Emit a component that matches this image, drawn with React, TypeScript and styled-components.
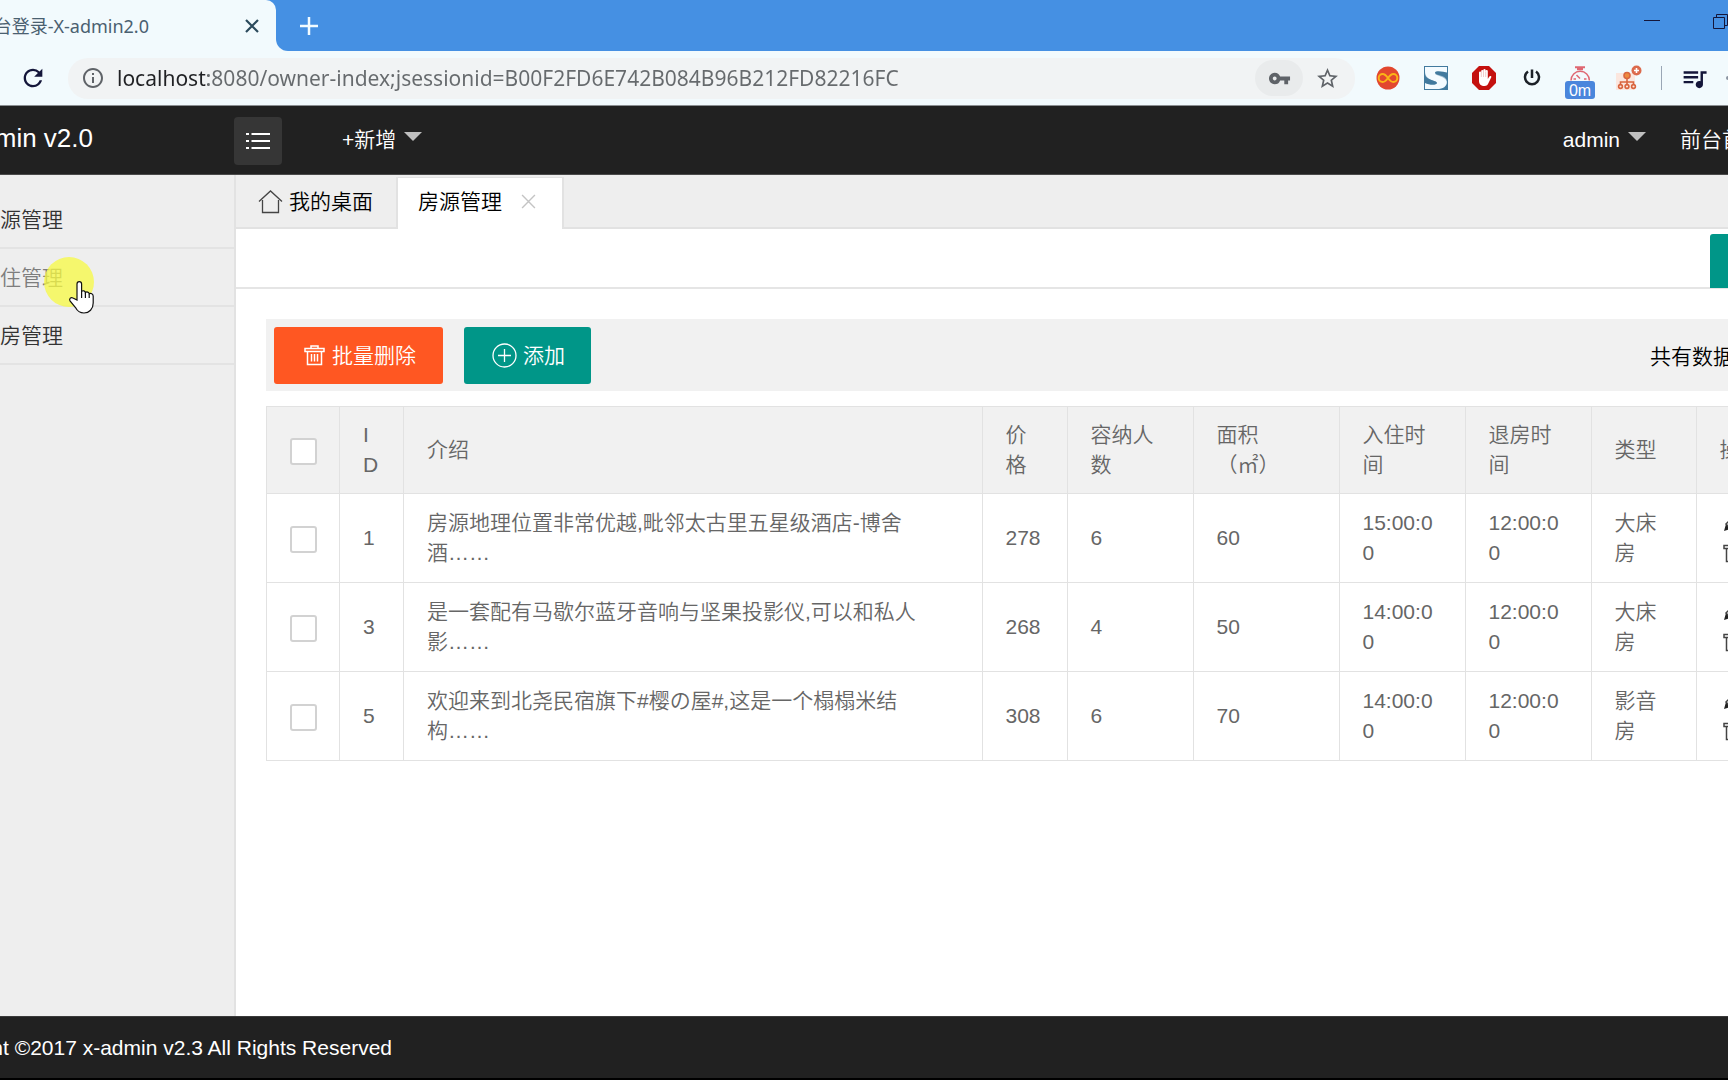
import React from "react";
import styled, { createGlobalStyle } from "styled-components";
import {
  MdInfoOutline,
  MdQueueMusic,
  MdRefresh,
  MdStarBorder,
  MdVpnKey,
} from "react-icons/md";

const GlobalStyle = createGlobalStyle`
  * { box-sizing: border-box; }
  body {
    margin: 0;
    overflow: hidden;
    font-family: "Liberation Sans", "Noto Sans CJK SC", sans-serif;
    font-size: 21px;
    font-weight: 350;
    line-height: 30px;
    text-spacing-trim: space-all;
    color: #000;
    background: #fff;
  }
  button, input { font: inherit; margin: 0; }
  button { border: 0; padding: 0; background: none; cursor: pointer; }
  svg { display: block; flex: none; }
`;

const Page = styled.div`
  display: flex;
  flex-direction: column;
  height: 100vh;
  overflow: hidden;
`;

/* Browser window */

const TabStrip = styled.div`
  display: flex;
  height: 51px;
  flex: none;
  background: #4590e3;
`;

const BrowserTab = styled.div`
  display: flex;
  align-items: center;
  justify-content: space-between;
  width: 276px;
  flex: none;
  padding-right: 17px;
  border-top-right-radius: 10px;
  background: #f2fafd;
`;

const BrowserTabTitle = styled.div`
  display: flex;
  justify-content: flex-end;
  width: 149px;
  overflow: hidden;
  white-space: nowrap;
  font-family: "Noto Sans", "Noto Sans CJK SC", sans-serif;
  font-size: 18px;
  font-weight: 400;
  color: #4a6070;
`;

const TabCorner = styled.div`
  display: flex;
  flex: 1;
  min-width: 0;
  background: linear-gradient(#4590e3 50%, #f2fafd 50%);
`;

const WindowBar = styled.div`
  display: flex;
  align-items: center;
  justify-content: space-between;
  flex: 1;
  padding-left: 24px;
  overflow: hidden;
  border-bottom-left-radius: 12px;
  background: #4590e3;
`;

const WindowButtons = styled.div`
  display: flex;
  align-items: center;
  gap: 52px;
  align-self: flex-start;
  padding-top: 12px;
`;

const BrowserBar = styled.div`
  display: flex;
  align-items: center;
  height: 55px;
  flex: none;
  padding: 0 0 0 19px;
  border-bottom: 1px solid #8b8f92;
  background: #f2fafd;
  color: #14163a;
`;

const AddressBar = styled.form`
  display: flex;
  align-items: center;
  flex: 1;
  min-width: 0;
  height: 41px;
  margin-left: 21px;
  padding: 0 15px 0 13px;
  border-radius: 20px;
  background: #f1f3f4;
  color: #5f6368;
`;

const AddressInput = styled.input`
  flex: 1;
  min-width: 0;
  margin-left: 12px;
  padding: 0;
  border: 0;
  outline: 0;
  font-family: "Noto Sans", sans-serif;
  font-size: 21px;
  font-weight: 400;
  color: #666a6d;
  background: linear-gradient(90deg, #202124 91px, #666a6d 91px);
  background-clip: text;
  -webkit-background-clip: text;
  -webkit-text-fill-color: transparent;
`;

const KeyButton = styled.button`
  display: grid;
  place-items: center;
  width: 48px;
  height: 36px;
  margin-right: 12px;
  border-radius: 18px;
  background: #e9ebec;
  color: #5f6368;
`;

const PlainButton = styled.button`
  display: grid;
  place-items: center;
  color: inherit;
`;

const Extensions = styled.div`
  display: flex;
  align-items: center;
  gap: 24px;
  flex: none;
  padding-left: 21px;
`;

const TimerExtension = styled.button`
  position: relative;
  display: grid;
  place-items: center;
`;

const TimerBadge = styled.span`
  position: absolute;
  top: 15px;
  left: -3px;
  width: 30px;
  height: 18px;
  border-radius: 3px;
  font-size: 16px;
  line-height: 19px;
  text-align: center;
  color: #fff;
  background: #4a86dc;
`;

const BarEnd = styled.div`
  display: flex;
  align-items: center;
  justify-content: space-between;
  flex: none;
  width: 67px;
  height: 24px;
  margin-left: 19px;
  border-left: 1px solid #9aa6b5;
  padding-left: 18px;
`;

/* Admin header */

const Header = styled.header`
  display: flex;
  align-items: center;
  height: 69px;
  flex: none;
  overflow: hidden;
  border-bottom: 1px solid #4a4a4a;
  background: #212121;
  color: #fff;
`;

const Logo = styled.a`
  display: flex;
  justify-content: flex-end;
  width: 93px;
  padding-bottom: 4px;
  overflow: hidden;
  white-space: nowrap;
  font-size: 26px;
  color: #fff;
  text-decoration: none;
`;

const MenuToggle = styled.button`
  display: grid;
  place-items: center;
  width: 48px;
  height: 48px;
  margin: 2px 0 0 141px;
  border-radius: 4px;
  background: #363636;
`;

const NavMenu = styled.button`
  display: flex;
  align-items: center;
  gap: 8px;
  color: #fff;
  white-space: nowrap;
`;

const AddMenu = styled(NavMenu)`
  margin-left: 60px;
`;

const Caret = styled.span`
  border: 9px solid transparent;
  border-top-color: #bfbfbf;
  border-bottom: 0;
  margin-bottom: 8px;
`;

const UserNav = styled.nav`
  display: flex;
  align-items: center;
  gap: 34px;
  margin-left: auto;
`;

const FrontLink = styled.a`
  width: 48px;
  overflow: hidden;
  white-space: nowrap;
  color: #fff;
  text-decoration: none;
`;

/* Body */

const Body = styled.div`
  display: flex;
  flex: 1;
  min-height: 0;
`;

const Sidebar = styled.nav`
  width: 236px;
  flex: none;
  padding-top: 16px;
  border-right: 2px solid #e2e2e2;
  background: #eeeeee;
`;

const SideItem = styled.div`
  position: relative;
`;

const SideLink = styled.a<{ $hover?: boolean }>`
  display: block;
  padding: 14px 0 12px;
  border-bottom: 2px solid #e3e3e3;
  color: ${(p) => (p.$hover ? "#7d7d7d" : "#333")};
  text-decoration: none;
`;

const PointerSpot = styled.div`
  position: absolute;
  left: 44px;
  top: 8px;
  width: 50px;
  height: 50px;
  border-radius: 50%;
  background: rgba(247, 249, 66, 0.75);
  pointer-events: none;
`;

const HandPointer = styled.svg`
  position: absolute;
  left: 24px;
  top: 23px;
`;

const Main = styled.main`
  display: flex;
  flex-direction: column;
  flex: 1;
  min-width: 0;
`;

const PageTabs = styled.div`
  display: flex;
  align-items: flex-end;
  height: 54px;
  background: linear-gradient(#eeeeee 52px, #e2e2e2 52px);
`;

const PageTab = styled.button<{ $active?: boolean }>`
  display: flex;
  align-items: center;
  gap: ${(p) => (p.$active ? "19px" : "6px")};
  height: 52px;
  padding: ${(p) => (p.$active ? "0 26px 4px 20px" : "0 23px 3px 22px")};
  border: solid #e2e2e2;
  border-width: ${(p) => (p.$active ? "1px 2px 0 2px" : "0")};
  background: ${(p) => (p.$active ? "#fff" : "none")};
  color: #000;
`;

const Crumbs = styled.div`
  display: flex;
  justify-content: flex-end;
  align-items: flex-end;
  height: 60px;
  border-bottom: 2px solid #e5e5e5;
`;

const RefreshButton = styled.button`
  width: 18px;
  height: 54px;
  margin-bottom: -1px;
  border-radius: 3px 0 0 0;
  background: #009688;
`;

const Content = styled.section`
  padding: 30px 0 0 30px;
`;

const ActionBar = styled.div`
  display: flex;
  align-items: center;
  gap: 21px;
  height: 72px;
  padding-left: 8px;
  background: #f1f1f1;
`;

const ActionButton = styled.button<{ $danger?: boolean }>`
  display: flex;
  align-items: center;
  gap: ${(p) => (p.$danger ? "7px" : "6px")};
  height: 57px;
  padding: ${(p) => (p.$danger ? "0 27px 0 30px" : "0 26px 0 28px")};
  border-radius: 3px;
  color: #fff;
  background: ${(p) => (p.$danger ? "#ff5722" : "#009688")};
`;

const ActionLabel = styled.span`
  padding-top: 2px;
`;

const Total = styled.span`
  width: 78px;
  margin-left: auto;
  padding-top: 3px;
  overflow: hidden;
  white-space: nowrap;
`;

const Table = styled.table`
  width: 100%;
  margin-top: 15px;
  table-layout: fixed;
  border-collapse: collapse;
  color: #666;
`;

const Col = styled.col<{ $width?: number }>`
  width: ${(p) => (p.$width ? `${p.$width}px` : "auto")};
`;

const HeadCell = styled.th`
  height: 87px;
  padding: 0 23px;
  border: 1px solid #e2e2e2;
  background: #f1f1f1;
  font-weight: inherit;
  text-align: left;
  word-break: break-all;
`;

const Cell = styled.td<{ $prose?: boolean }>`
  height: 89px;
  padding: 0 23px;
  border: 1px solid #e2e2e2;
  word-break: ${(p) => (p.$prose ? "normal" : "break-all")};
`;

const EdgeCell = styled(Cell)`
  padding-right: 0;
  border-right: 0;
  overflow: hidden;
`;

const EdgeHeadCell = styled(HeadCell)`
  padding-right: 0;
  border-right: 0;
  overflow: hidden;
  white-space: nowrap;
`;

const RowActions = styled.div`
  display: flex;
  flex-direction: column;
  gap: 8px;
  padding-left: 3px;
`;

const Tick = styled.input`
  display: block;
  width: 27px;
  height: 27px;
  appearance: none;
  border: 2px solid #d2d2d2;
  border-radius: 3px;
  background: #fff;
`;

const TickBox = styled.div`
  padding-top: 2px;
`;

const Footer = styled.footer`
  height: 64px;
  flex: none;
  padding-top: 16px;
  border-top: 1px solid #3a3a3a;
  border-bottom: 2px solid #000;
  background: #212121;
  color: #fff;
`;

const FooterText = styled.div`
  display: flex;
  justify-content: flex-end;
  width: 392px;
  overflow: hidden;
  white-space: nowrap;
`;

const Cross = ({ size, color, width }: { size: number; color: string; width: number }) => (
  <svg width={size} height={size} viewBox="0 0 14 14" fill="none" stroke={color} strokeWidth={width}>
    <path d="M1 1l12 12M13 1L1 13" />
  </svg>
);

const Trash = ({ color = "currentColor" }: { color?: string }) => (
  <svg width="21" height="21" viewBox="0 0 21 21" fill="none" stroke={color} strokeWidth="1.5">
    <path d="M7 3V1h7v2M1 3.5h19v3H1zM3.500 6.500V19.500h14V6.500M7.500 9v7.500M10.500 9v7.500M13.500 9v7.500" />
  </svg>
);

const Pencil = () => (
  <svg width="21" height="21" viewBox="0 0 21 21">
    <path d="M1 18l2-7 5 5z" fill="#222" />
    <path d="M3 11L12 2l5 5L8 16z" fill="none" stroke="#444" strokeWidth="1.500" />
  </svg>
);

const Infinity = () => (
  <svg width="24" height="24" viewBox="0 0 24 24">
    <circle cx="12" cy="12" r="11.500" fill="#e2472f" />
    <path
      d="M12 12c-2-2.800-3.500-4-5.300-4a4 4 0 000 8c1.800 0 3.300-1.200 5.300-4s3.500-4 5.300-4a4 4 0 010 8c-1.800 0-3.300-1.200-5.300-4z"
      fill="none"
      stroke="#fbb416"
      strokeWidth="1.900"
    />
  </svg>
);

const SLogo = () => (
  <svg width="24" height="24" viewBox="0 0 24 24">
    <path d="M0 0h24v24H0z" fill="#427a9e" />
    <path d="M1 1h22v6c-3-1.800-12-2.800-12-.3 0 3 12 1.800 12 8.800 0 5-4 7.500-10 7.500H1v-6c4 2.200 12 2.500 12 0C13 14 1 14.500 1 7.500z" fill="#f4fbff" />
    <path d="M1 5v10c3 1.500 9 2 12 2-1-3-12-2-12-12zM23 6v11c0-6-9-7-12-9 3-1.500 8-1 12-2z" fill="#427a9e" opacity="0.500" />
  </svg>
);

const BlockHand = () => (
  <svg width="24" height="24" viewBox="0 0 24 24">
    <path d="M7 0h10l7 7v10l-7 7H7l-7-7V7z" fill="#c4110f" />
    <path
      d="M7 12V6.500a1.100 1.100 0 012.200 0V5a1.100 1.100 0 012.200 0V4a1.100 1.100 0 012.200 0v1.200a1.100 1.100 0 012.200 0V13l1.500-2.500c1-1.200 2.500-.4 2 .8L16.500 17c-.7 1.800-1.800 3-4 3-3.500 0-5.500-2-5.500-5z"
      fill="#fff"
    />
    <path d="M9.300 6v5M11.500 5v6M13.700 5.500V11" stroke="#e59a99" strokeWidth=".5" />
  </svg>
);

const Power = () => (
  <svg width="24" height="24" viewBox="0 0 24 24" fill="none" stroke="#1c2128" strokeWidth="2.500">
    <path d="M12 3.500V12M8 5.500a7 7 0 108 0" />
  </svg>
);

const Timer = () => (
  <svg width="24" height="24" viewBox="0 0 24 24" fill="none" stroke="#df6873" strokeWidth="1.500">
    <path d="M7 1.200h10M9 3.300h6" strokeWidth="2" />
    <path d="M3 14.500a9.200 9.200 0 0118.400 0M12 12.500L8.500 9M5.500 13h2.500M16 13h2.500" />
  </svg>
);

const Tree = () => (
  <svg width="26" height="26" viewBox="0 0 26 26" fill="none" stroke="#d9653f" strokeWidth="1.600">
    <path d="M0 8h19v17H0z" fill="#fbe6de" stroke="none" />
    <circle cx="11" cy="10.500" r="3" fill="#ee8a3c" />
    <path d="M11 14v6M4.500 20v-3h13v3" />
    <circle cx="4.500" cy="21.500" r="1.900" />
    <circle cx="11" cy="21.500" r="1.900" />
    <circle cx="17.500" cy="21.500" r="1.900" />
    <circle cx="20.500" cy="5.500" r="5" fill="#dc6a4c" stroke="none" />
    <path d="M20.500 3v5M18 5.500h5" stroke="#fff" />
  </svg>
);

const rooms = [
  { id: 1, intro: "房源地理位置非常优越,毗邻太古里五星级酒店-博舍酒……", price: 278, guests: 6, area: 60, from: "15:00:00", to: "12:00:00", type: "大床房" },
  { id: 3, intro: "是一套配有马歇尔蓝牙音响与坚果投影仪,可以和私人影……", price: 268, guests: 4, area: 50, from: "14:00:00", to: "12:00:00", type: "大床房" },
  { id: 5, intro: "欢迎来到北尧民宿旗下#樱の屋#,这是一个榻榻米结构……", price: 308, guests: 6, area: 70, from: "14:00:00", to: "12:00:00", type: "影音房" },
];

const headings = ["ID", "介绍", "价格", "容纳人数", "面积（㎡）", "入住时间", "退房时间", "类型"];

export default function App() {
  return (
    <Page>
      <GlobalStyle />
      <TabStrip>
        <BrowserTab>
          <BrowserTabTitle>台登录-X-admin2.0</BrowserTabTitle>
          <PlainButton aria-label="关闭标签页">
            <Cross size={14} color="#2b4a5c" width={2.2} />
          </PlainButton>
        </BrowserTab>
        <TabCorner>
          <WindowBar>
            <PlainButton aria-label="新标签页">
              <svg width="18" height="18" viewBox="0 0 18 18" stroke="#f2fbff" strokeWidth="2.500">
                <path d="M9 0v18M0 9h18" />
              </svg>
            </PlainButton>
            <WindowButtons>
              <PlainButton aria-label="最小化">
                <svg width="16" height="17" viewBox="0 0 16 17" stroke="#14163a">
                  <path d="M0 8.500h16" />
                </svg>
              </PlainButton>
              <PlainButton aria-label="还原">
                <svg width="16" height="17" viewBox="0 0 16 17" fill="none" stroke="#14163a">
                  <path d="M1.500 5.500h11v11h-11zM4.500 5V2.500h11V13.500H13" />
                </svg>
              </PlainButton>
            </WindowButtons>
          </WindowBar>
        </TabCorner>
      </TabStrip>

      <BrowserBar>
        <PlainButton aria-label="重新加载">
          <MdRefresh size={28} />
        </PlainButton>
        <AddressBar>
          <MdInfoOutline size={24} />
          <AddressInput
            aria-label="地址"
            defaultValue="localhost:8080/owner-index;jsessionid=B00F2FD6E742B084B96B212FD82216FC"
          />
          <KeyButton type="button" aria-label="密码">
            <MdVpnKey size={23} />
          </KeyButton>
          <PlainButton type="button" aria-label="收藏">
            <MdStarBorder size={25} />
          </PlainButton>
        </AddressBar>
        <Extensions>
          <Infinity />
          <SLogo />
          <BlockHand />
          <Power />
          <TimerExtension aria-label="计时器">
            <Timer />
            <TimerBadge>0m</TimerBadge>
          </TimerExtension>
          <Tree />
        </Extensions>
        <BarEnd>
          <MdQueueMusic size={29} />
          <svg width="2" height="4" viewBox="0 0 2 4">
            <path d="M0 2a2 2 0 012-2v4a2 2 0 01-2-2z" fill="#8b93a0" />
          </svg>
        </BarEnd>
      </BrowserBar>

      <Header>
        <Logo href="#">min v2.0</Logo>
        <MenuToggle aria-label="菜单">
          <svg width="24" height="18" viewBox="0 0 24 18" stroke="#fff" strokeWidth="2">
            <path d="M0 2h3M5.500 2H24M0 9h3M5.500 9H24M0 16h3M5.500 16H24" />
          </svg>
        </MenuToggle>
        <AddMenu>
          +新增
          <Caret />
        </AddMenu>
        <UserNav>
          <NavMenu>
            admin
            <Caret />
          </NavMenu>
          <FrontLink href="#">前台首</FrontLink>
        </UserNav>
      </Header>

      <Body>
        <Sidebar>
          <SideItem>
            <SideLink href="#">源管理</SideLink>
          </SideItem>
          <SideItem>
            <SideLink href="#" $hover>
              住管理
            </SideLink>
            <PointerSpot>
              <HandPointer width="27" height="34" viewBox="0 0 27 34">
                <path
                  d="M9 20V4a2.300 2.300 0 014.600 0v7.500c1-1.300 3.600-.8 3.800 1 1.300-1 3.500-.5 3.800 1.200 1.600-.8 4 .2 4 2.500V23c0 6-4 10-9.200 10-5 0-7-2.500-8.500-5.500L2 21c-1.200-2.500 1-4.200 3-3z"
                  fill="#fff"
                  stroke="#111"
                  strokeWidth="1.200"
                />
                <path d="M13.600 11v7M17.400 12.500V18M21.200 14v4" stroke="#111" strokeWidth="1.200" />
              </HandPointer>
            </PointerSpot>
          </SideItem>
          <SideItem>
            <SideLink href="#">房管理</SideLink>
          </SideItem>
        </Sidebar>

        <Main>
          <PageTabs>
            <PageTab>
              <svg width="25" height="24" viewBox="0 0 25 24" fill="none" stroke="#444" strokeWidth="1.300">
                <path d="M1 11.500L12.500 1 24 11.500M4.500 10v12.500h16V10" />
              </svg>
              我的桌面
            </PageTab>
            <PageTab $active>
              房源管理
              <Cross size={15} color="#c4c4c4" width={1.3} />
            </PageTab>
          </PageTabs>
          <Crumbs>
            <RefreshButton aria-label="刷新" />
          </Crumbs>
          <Content>
            <ActionBar>
              <ActionButton $danger>
                <Trash />
                <ActionLabel>批量删除</ActionLabel>
              </ActionButton>
              <ActionButton>
                <svg width="25" height="25" viewBox="0 0 25 25" fill="none" stroke="#fff" strokeWidth="1.300">
                  <circle cx="12.500" cy="12.500" r="11.500" />
                  <path d="M12.500 6v13M6 12.500h13" />
                </svg>
                <ActionLabel>添加</ActionLabel>
              </ActionButton>
              <Total>共有数据</Total>
            </ActionBar>
            <Table>
              <colgroup>
                <Col $width={73} />
                <Col $width={64} />
                <Col />
                <Col $width={85} />
                <Col $width={126} />
                <Col $width={146} />
                <Col $width={126} />
                <Col $width={126} />
                <Col $width={105} />
                <Col $width={32} />
              </colgroup>
              <thead>
                <tr>
                  <HeadCell>
                    <TickBox>
                      <Tick type="checkbox" aria-label="全选" />
                    </TickBox>
                  </HeadCell>
                  {headings.map((h) => (
                    <HeadCell key={h}>{h}</HeadCell>
                  ))}
                  <EdgeHeadCell>操</EdgeHeadCell>
                </tr>
              </thead>
              <tbody>
                {rooms.map((r) => (
                  <tr key={r.id}>
                    <Cell>
                      <TickBox>
                        <Tick type="checkbox" aria-label={`选择 ${r.id}`} />
                      </TickBox>
                    </Cell>
                    <Cell>{r.id}</Cell>
                    <Cell $prose>{r.intro}</Cell>
                    <Cell>{r.price}</Cell>
                    <Cell>{r.guests}</Cell>
                    <Cell>{r.area}</Cell>
                    <Cell>{r.from}</Cell>
                    <Cell>{r.to}</Cell>
                    <Cell>{r.type}</Cell>
                    <EdgeCell>
                      <RowActions>
                        <Pencil />
                        <Trash color="#444" />
                      </RowActions>
                    </EdgeCell>
                  </tr>
                ))}
              </tbody>
            </Table>
          </Content>
        </Main>
      </Body>

      <Footer>
        <FooterText>nt ©2017 x-admin v2.3 All Rights Reserved</FooterText>
      </Footer>
    </Page>
  );
}
